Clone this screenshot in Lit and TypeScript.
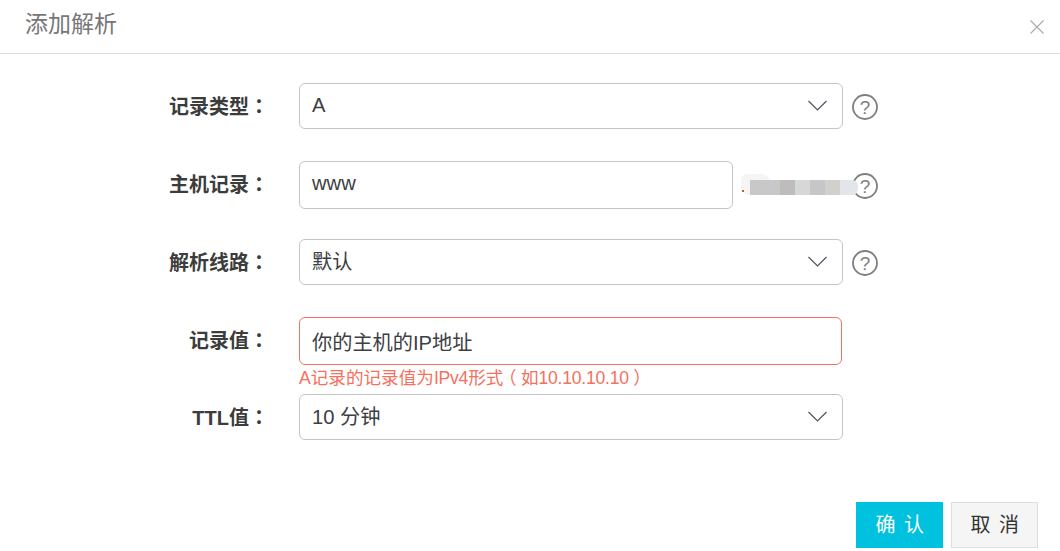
import { LitElement, html, css } from "lit";
import { customElement } from "lit/decorators.js";

const chevron = html`<svg class="chev" width="22" height="12" viewBox="0 0 22 12"><path d="M1.5 1 L10.5 10 L19.5 1" fill="none" stroke="#4a5560" stroke-width="1.2"/></svg>`;
const help = html`<svg class="help" width="26" height="26" viewBox="0 0 26 26"><circle cx="13" cy="13" r="12" fill="none" stroke="#7f7f7f" stroke-width="1.8"/><text x="13" y="19.5" text-anchor="middle" font-family="Liberation Sans, sans-serif" font-size="19" fill="#7f7f7f">?</text></svg>`;
const blur = ["#c8c8c8", "#c6c8ca", "#bfbdbb", "#d6d8d8", "#c6c6c8", "#d2d0cc", "#e2e6ea"];

@customElement("app-root")
export class AppRoot extends LitElement {
  static styles = css`
    :host { display: block; width: 1060px; height: 551px; background: #fff; overflow: hidden;
      font-family: "Liberation Sans", "Noto Sans CJK SC", sans-serif; color: #333; }
    * { box-sizing: border-box; }
    .header { height: 54px; border-bottom: 1px solid #dcdcdc; padding: 0 16px 0 25px; display: flex; align-items: center; justify-content: space-between; }
    .title { font-size: 23px; color: #777; line-height: 50px; margin-bottom: 5px; }
    .close { display: block; }
    .form { padding: 29px 0 0 168px; display: flex; flex-direction: column; }
    .row { display: flex; align-items: center; }
    .r1 { margin-bottom: 32px; height: 46px; }
    .r2 { margin-bottom: 30px; height: 48px; }
    .r3 { margin-bottom: 32px; height: 46px; }
    .r4 { height: 48px; }
    .r5 { height: 46px; margin-top: 29px; }
    .lab { width: 131px; flex: none; display: flex; justify-content: flex-end; font-size: 20px; font-weight: 700; color: #3c3c3c; white-space: nowrap; margin-top: -3px; }
    .r1 .lab, .r3 .lab, .r5 .lab { margin-top: -1px; }
    .colon { width: 50px; font-family: "Noto Sans CJK TC", sans-serif; }
    .field { height: 100%; border: 1px solid #c4c4c4; border-radius: 6px; display: flex; align-items: center; justify-content: space-between; padding: 0 12px; font-size: 20.2px; color: #3c4043; flex: none; }
    .field span { display: block; margin-top: -3px; }
    .select { width: 544px; }
    .short { width: 434px; }
    .error { width: 543px; border-color: #f0735f; }
    .error span { margin-top: 0; }
    .r1 .field span { margin-top: -2px; }
    .r5 .field span { margin-top: -4px; }
    .chev { display: block; margin-right: 1px; }
    .help { display: block; margin-left: 9px; margin-top: 2px; flex: none; }
    .domain { width: 119px; flex: none; position: relative; height: 100%; }
    .dot { position: absolute; left: 9px; top: 29px; width: 2px; height: 2px; background: #b36a20; z-index: 1; }
    .halo { position: absolute; left: 8px; top: 13px; width: 30px; height: 21px; background: #f5f5f5; border-radius: 6px 10px 0 8px; }
    .mosaic { position: absolute; left: 17px; top: 19px; display: flex; height: 15px; z-index: 2; }
    .mosaic i { width: 15px; height: 15px; display: block; }
    .mosaic i:last-child { width: 18px; border-radius: 0 6px 6px 0; }
    .domain + .help { margin-left: 0; }
    .hint { margin-left: 131px; height: 22px; padding-top: 2px; line-height: 23px; font-size: 17.6px; color: #f4715d; white-space: nowrap; margin-bottom: -22px; }
    .hint b { font-weight: 400; display: inline-block; width: 17.6px; line-height: 20px; text-align: center; font-feature-settings: "halt"; }
    .hint em { font-style: normal; letter-spacing: -0.25px; }
    .footer { margin-top: 62px; padding-left: 856px; display: flex; gap: 8px; }
    .btn { width: 87px; height: 46px; display: flex; align-items: center; justify-content: center; font-size: 20px; letter-spacing: 1.5px; padding-left: 2px; }
    .btn span { display: block; margin-top: -3px; }
    .ok { background: #00c1de; color: #fff; }
    .cancel { background: #f5f5f5; border: 1px solid #ddd; color: #333; }
  `;

  private lab(t: string) {
    return html`<div class="lab"><span>${t}</span><span class="colon">：</span></div>`;
  }

  render() {
    return html`
      <div class="header">
        <div class="title">添加解析</div>
        <svg class="close" width="14" height="14" viewBox="0 0 14 14"><path d="M0.5 0.5 L13.5 13.5 M13.5 0.5 L0.5 13.5" stroke="#a8acb0" stroke-width="1.2" fill="none"/></svg>
      </div>
      <div class="form">
        <div class="row r1">${this.lab("记录类型")}<div class="field select"><span>A</span>${chevron}</div>${help}</div>
        <div class="row r2">${this.lab("主机记录")}<div class="field short"><span>www</span></div>
          <div class="domain"><div class="halo"></div><div class="dot"></div><div class="mosaic">${blur.map((c) => html`<i style="background:${c}"></i>`)}</div></div>${help}</div>
        <div class="row r3">${this.lab("解析线路")}<div class="field select"><span>默认</span>${chevron}</div>${help}</div>
        <div class="row r4">${this.lab("记录值")}<div class="field error"><span>你的主机的IP地址</span></div></div>
        <div class="hint">A记录的记录值为<em>IPv4</em>形式<b>（</b>如<em>10.10.10.10</em><b>）</b></div>
        <div class="row r5">${this.lab("TTL值")}<div class="field select"><span>10 分钟</span>${chevron}</div></div>
      </div>
      <div class="footer"><div class="btn ok"><span>确 认</span></div><div class="btn cancel"><span>取 消</span></div></div>
    `;
  }
}
